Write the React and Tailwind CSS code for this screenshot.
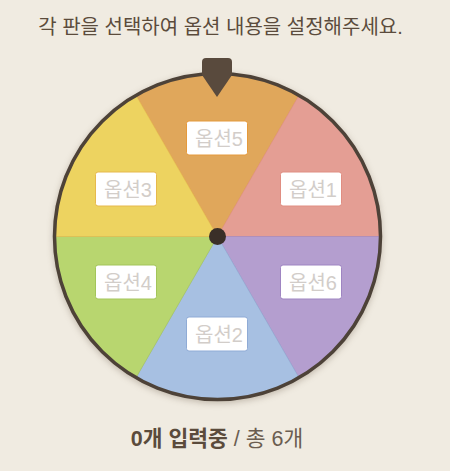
import React from "react";

const slices = [
  { from: -30, fill: "#e0a75b", border: "#e59a3c", label: "옵션5", x: 165, y: 67 },
  { from: 30, fill: "#e49e94", border: "#e08e82", label: "옵션1", x: 259, y: 118 },
  { from: 90, fill: "#b49ecf", border: "#9f85c2", label: "옵션6", x: 259, y: 211 },
  { from: 150, fill: "#a7c0e2", border: "#8fabd6", label: "옵션2", x: 165, y: 263 },
  { from: 210, fill: "#b8d66f", border: "#a3c55a", label: "옵션4", x: 74, y: 211 },
  { from: 270, fill: "#edd360", border: "#e6b94d", label: "옵션3", x: 74, y: 118 },
];

const C = 165.5;
const R = 163;

function pt(deg) {
  const a = (deg * Math.PI) / 180;
  return [C + R * Math.sin(a), C - R * Math.cos(a)];
}

function slicePath(from) {
  const [x1, y1] = pt(from);
  const [x2, y2] = pt(from + 60);
  return `M${C} ${C} L${x1} ${y1} A${R} ${R} 0 0 1 ${x2} ${y2} Z`;
}

function Wheel() {
  return (
    <div className="relative mt-[30px] ml-[52px] w-[331px] h-[331px]">
      <svg
        width="331"
        height="331"
        viewBox="0 0 331 331"
        className="drop-shadow-[0_2px_3px_rgba(60,40,20,0.25)]"
      >
        {slices.map((s) => (
          <path
            key={s.label}
            d={slicePath(s.from)}
            fill={s.fill}
            stroke={s.border}
            strokeOpacity="0.6"
            strokeWidth="1"
          />
        ))}
        <circle cx={C} cy={C} r={R} fill="none" stroke="#4d4238" strokeWidth="3.5" />
        <circle cx={C} cy={C} r="8.5" fill="#3a2f28" />
      </svg>

      {slices.map((s) => (
        <div
          key={s.label}
          className="absolute w-[62px] h-[35px] -translate-x-1/2 -translate-y-1/2 bg-white rounded-[3px] border flex items-center justify-center pl-[4px] text-[20px] text-[#d2cdc9]"
          style={{ left: s.x, top: s.y, borderColor: s.border }}
        >
          {s.label}
        </div>
      ))}

      {/* pointer */}
      <svg
        width="32"
        height="40"
        viewBox="0 0 32 40"
        className="absolute left-[149px] top-[-13px]"
      >
        <path
          d="M5 0 H27 Q31 0 31 4 V17 L16 39 L1 17 V4 Q1 0 5 0 Z"
          fill="#594a3d"
        />
      </svg>
    </div>
  );
}

export default function App() {
  return (
    <div className="w-[450px] min-h-screen bg-[#f0ebe1] font-['Liberation_Sans','Noto_Sans_CJK_KR',sans-serif]">
      <p className="pt-[14px] pr-[9px] text-center text-[20px] leading-[27px] text-[#5b4b3c]">
        각 판을 선택하여 옵션 내용을 설정해주세요.
      </p>
      <Wheel />
      <p className="mt-[23px] pr-[16px] text-center text-[21.5px] leading-[28px] text-[#5b4b3c]">
        <span className="font-bold">0개 입력중</span>
        <span className="text-[#6b5d50]"> / 총 6개</span>
      </p>
    </div>
  );
}
